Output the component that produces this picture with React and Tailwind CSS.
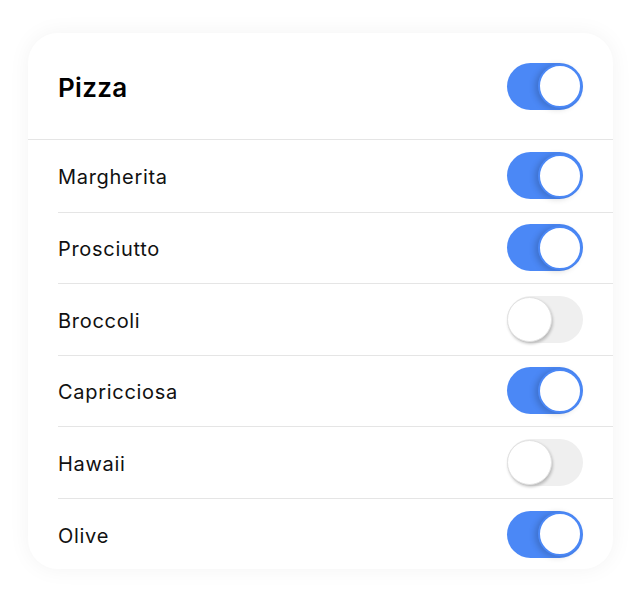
import React from "react";

function Toggle({ on }) {
  return on ? (
    <div className="flex h-[47px] w-[76px] items-center justify-end rounded-full bg-[#4b88f6] pr-[1px]">
      <div className="h-[44px] w-[44px] rounded-full border-2 border-[#4b88f6] bg-white shadow-[-3px_1px_6px_rgba(0,0,0,0.18)]" />
    </div>
  ) : (
    <div className="flex h-[47px] w-[76px] items-center justify-start rounded-full bg-[#efefef]">
      <div className="h-[45px] w-[45px] rounded-full border border-[#e2e2e2] bg-white shadow-[1px_2px_3px_rgba(0,0,0,0.22)]" />
    </div>
  );
}

const items = [
  ["Margherita", true],
  ["Prosciutto", true],
  ["Broccoli", false],
  ["Capricciosa", true],
  ["Hawaii", false],
  ["Olive", true],
];

export default function App() {
  return (
    <div
      className="h-[590px] w-[640px] bg-white pl-[28px] pt-[33px]"
      style={{ fontFamily: "Inter, 'Noto Sans', sans-serif" }}
    >
      <div className="w-[585px] overflow-hidden rounded-[30px] bg-white shadow-[0_0_22px_rgba(0,0,0,0.05)]">
        <div className="flex h-[107px] items-center justify-between border-b border-[#e5e5e5] pl-[30px] pr-[30px]">
          <span className="pt-[2px] text-[26px] font-semibold tracking-[0.3px] text-black">Pizza</span>
          <Toggle on />
        </div>
        {items.map(([name, on], i) => (
          <div key={name} className={`ml-[30px] ${i > 0 ? "border-t border-[#e5e5e5]" : ""}`}>
            <div className={`flex ${i > 0 ? "h-[70.6px]" : "h-[71.5px]"} items-center justify-between pr-[30px]`}>
              <span className="pt-[3px] text-[20px] font-normal tracking-[0.7px] text-[#111]">{name}</span>
              <Toggle on={on} />
            </div>
          </div>
        ))}
      </div>
    </div>
  );
}
